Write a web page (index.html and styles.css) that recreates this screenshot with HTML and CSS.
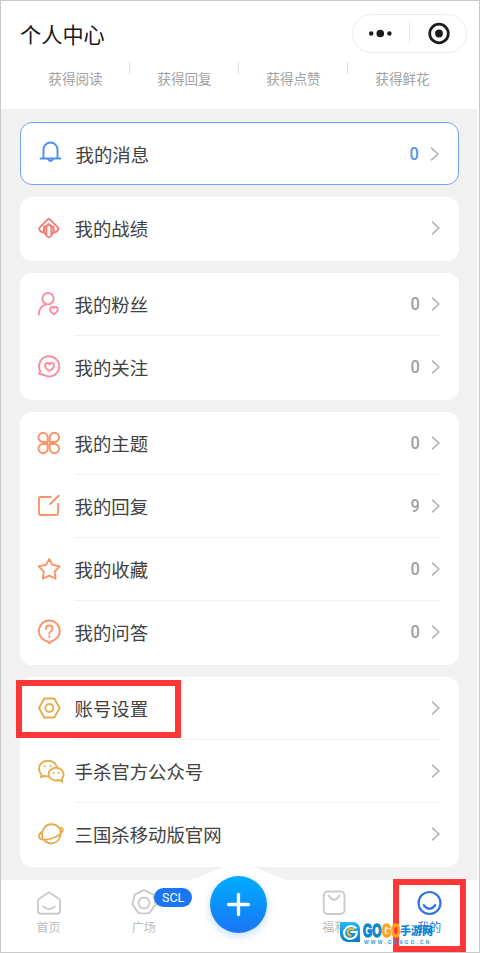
FILE: index.html
```html
<!DOCTYPE html>
<html lang="zh-CN">
<head>
<meta charset="utf-8">
<title>个人中心</title>
<link rel="stylesheet" href="styles.css">
</head>
<body>
<svg class="defs" width="0" height="0"><defs>
<symbol id="chev" viewBox="0 0 10 14"><path d="M1.5 1.2 8 7l-6.5 5.8"/></symbol>
</defs></svg>
<div class="screen">
  <header class="header">
    <div class="titlebar">
      <h1>个人中心</h1>
      <div class="capsule">
        <svg viewBox="0 0 114 40"><g fill="#1b1b1b"><circle cx="18.200" cy="19.500" r="2.200"/><circle cx="27.300" cy="19.500" r="3.800"/><circle cx="36.400" cy="19.500" r="2.200"/><circle cx="86" cy="19.500" r="3.900"/></g><path d="M56.500 8v22" stroke="#ededed"/><circle cx="86" cy="19.500" r="9.300" fill="none" stroke="#1b1b1b" stroke-width="2.700"/></svg>
      </div>
    </div>
    <div class="stats"><span>获得阅读</span><span>获得回复</span><span>获得点赞</span><span>获得鲜花</span></div>
  </header>

  <main class="list">
    <section class="card active">
      <div class="row blue"><svg class="icon" viewBox="0 0 28 28"><path d="M7.500 20V11.500a7 7 0 0 1 14 0V20M4.500 20.500h20M12.200 21.500q2.300 3 4.600 0"/></svg><div class="body"><span>我的消息</span><b>0</b><svg class="chev"><use href="#chev"/></svg></div></div>
    </section>
    <section class="card">
      <div class="row red"><svg class="icon" viewBox="0 0 28 28"><path d="M11.300 20.800 9 18.600Q5.500 18.500 4.300 15.500q-.5-1.200.5-2.200l7.700-7.700q1.300-1.200 2.600 0l7.700 7.700q1 1 .5 2.200-1.200 3-4.700 3.100l-2.300 2.200M11.300 13.500v8q2.500 3.500 5 0v-8M9 18.600v-6q3.200.2 4.800-2.600 1.600 2.800 4.800 2.600v6"/></svg><div class="body"><span>我的战绩</span><svg class="chev"><use href="#chev"/></svg></div></div>
    </section>
    <section class="card">
      <div class="row pink"><svg class="icon" viewBox="0 0 28 28"><circle cx="13" cy="8.700" r="5.700"/><path d="M3.800 24.500q.2-8.200 7.200-10.200M18.900 24.100c-5.500-3-4.200-7.100-1.800-7.100 1.100 0 1.800.8 1.800 1.200 0-.4.700-1.200 1.800-1.200 2.400 0 3.700 4.100-1.800 7.100Z"/></svg><div class="body"><span>我的粉丝</span><b>0</b><svg class="chev"><use href="#chev"/></svg></div></div>
      <div class="row pink"><svg class="icon" viewBox="0 0 28 28"><path d="M5.200 18A10.100 10.100 0 1 1 9 22L3.800 20.700q1.700-.6 1.400-2.700M14.500 18c-6.500-3.800-4.800-8-2.200-8 1.300 0 2.200 1 2.200 1.500 0-.5.900-1.500 2.200-1.500 2.600 0 4.300 4.200-2.200 8Z"/></svg><div class="body"><span>我的关注</span><b>0</b><svg class="chev"><use href="#chev"/></svg></div></div>
    </section>
    <section class="card">
      <div class="row orange"><svg class="icon" viewBox="0 0 28 28"><path d="M12.700 13H8.200a4.600 4.600 0 1 1 4.500-4.600ZM14.800 13h4.500a4.600 4.600 0 1 0-4.500-4.600ZM12.700 15H8.200a4.600 4.600 0 1 0 4.500 4.600ZM14.800 15h4.500a4.600 4.600 0 1 1-4.500 4.600Z"/></svg><div class="body"><span>我的主题</span><b>0</b><svg class="chev"><use href="#chev"/></svg></div></div>
      <div class="row orange"><svg class="icon" viewBox="0 0 28 28"><path d="M15.800 5H5.500Q4 5 4 6.500v15Q4 23 5.500 23h16q1.500 0 1.500-1.500V11.800M15.200 12l8.600-8.200"/></svg><div class="body"><span>我的回复</span><b>9</b><svg class="chev"><use href="#chev"/></svg></div></div>
      <div class="row orange"><svg class="icon" viewBox="0 0 28 28"><path d="m14.200 4 3.200 5.900 7.200 1.400-5 5.300 1 7-6.400-3-6.400 3 1-7-5-5.300L11 9.900Z"/></svg><div class="body"><span>我的收藏</span><b>0</b><svg class="chev"><use href="#chev"/></svg></div></div>
      <div class="row orange"><svg class="icon" viewBox="0 0 28 28"><path d="M14.300 25.300q-1-2.100-4.100-2.800a10.400 10.400 0 1 1 8.200 0q-3.100.7-4.100 2.800ZM10.900 10.800q0-3.300 3.400-3.300 3.300 0 3.300 3 0 1.500-1.800 2.700-1.500 1-1.500 2.500M14.300 17.900v1"/></svg><div class="body"><span>我的问答</span><b>0</b><svg class="chev"><use href="#chev"/></svg></div></div>
    </section>
    <section class="card">
      <div class="row gold"><svg class="icon" viewBox="0 0 28 28"><path d="M9.300 4.500h10L24.600 14l-5.300 9.500h-10L4 14Z"/><circle cx="14.300" cy="14" r="4"/></svg><div class="body"><span>账号设置</span><svg class="chev"><use href="#chev"/></svg></div></div>
      <div class="row gold"><svg class="icon" viewBox="0 0 28 28"><path d="M13.300 19.300q-2 .2-4-.5L6 20.300l.5-2.900A7.900 7.900 0 0 1 4 11.500C4 7 8 3.800 13 3.800c4.700 0 8 2.700 8.700 6.200M28.600 17.300c0-3.800-3.500-6.500-7.500-6.500s-7.500 2.700-7.500 6.200c0 3.700 3.500 6.500 7.500 6.500q1.500 0 3-.5l3.300 1.700-.5-2.800q1.700-1.700 1.700-4.600Z"/><path class="dots" d="M9.700 9.300v.1M15.300 9.300v.1M18.800 16v.1M23.500 16v.1"/></svg><div class="body"><span>手杀官方公众号</span><svg class="chev"><use href="#chev"/></svg></div></div>
      <div class="row gold"><svg class="icon" viewBox="0 0 28 28"><path d="M7.500 17.500C5.800 10.500 10 4.200 16.500 4.200c6.500 0 10.500 5.300 9 11.300-1.200 4.800-5 8-9.500 8q-4 0-6.500-2.800M7.300 11.500C3.800 14 3 16.800 4.600 18.300c2.600 2.400 11 1.700 17-1.800 6-3.400 8-7.300 4.600-8.500"/></svg><div class="body"><span>三国杀移动版官网</span><svg class="chev"><use href="#chev"/></svg></div></div>
    </section>
  </main>

  <nav class="tabs">
    <svg class="hump" viewBox="0 0 120 16"><path d="M0 16C24 16 36 0 60 0s36 16 60 16Z" fill="#fff"/></svg>
    <div class="tab"><svg viewBox="0 0 28 28"><path d="M14 3.200 4 9.800q-1 .7-1 2v10q0 3 3 3h16q3 0 3-3v-10q0-1.300-1-2ZM8.200 17.400q5.800 5.500 11.600 0"/></svg><span>首页</span></div>
    <div class="tab"><svg viewBox="0 0 28 28"><path d="m14 1.200 9.300 4.500 2.300 9.700-6.400 9H8.800l-6.400-9 2.300-9.700Z"/><circle cx="14" cy="14" r="5.500"/></svg><span>广场</span><i class="badge">SCL</i></div>
    <div class="tab"><div class="add"><svg viewBox="0 0 57 57"><path d="M28.500 18.500v20M18.500 28.500h20"/></svg></div></div>
    <div class="tab"><svg viewBox="0 0 28 28"><rect x="3.700" y="2.500" width="20.800" height="22.500" rx="4"/><path d="M8.800 6.500q5.300 8.500 10.600 0"/></svg><span>福利</span></div>
    <div class="tab on"><svg viewBox="0 0 28 28"><circle cx="14.500" cy="14" r="11"/><path d="M8.800 16.200q5.700 7 11.400 0"/></svg><span>我的</span></div>
  </nav>

  <div class="mark mark-setting"></div>
  <div class="mark mark-mine"></div>
  <div class="watermark">
    <svg viewBox="0 0 22 22"><defs><linearGradient id="wg" x2="0" y2="1"><stop stop-color="#29b8f5"/><stop offset="1" stop-color="#087cc5"/></linearGradient></defs><path d="M0 0h14q7 1 7 8v13H8Q1 20 0 13Z" fill="url(#wg)"/><path d="M17 6.500Q13 2.500 8 5.300 2.500 9 5 14.500q3 4.500 8.500 2.500 4-1.500 4-6.500h-6.500" fill="none" stroke="#fff" stroke-width="2.200"/><path d="M15 8Q10 5.500 8 10q0 4 4 4.500" fill="none" stroke="#ffb52b" stroke-width="2"/></svg>
    <div class="wm-text"><div class="wm-name"><em>GO</em><em class="gold-go">GO</em><strong>手游网</strong></div><small>WWW.GO9GO.CN</small></div>
  </div>
</div>
</body>
</html>
```
FILE: styles.css
```css
* { box-sizing: border-box; }
body {
  margin: 0;
  background: #fff;
  font-family: "Noto Sans CJK SC", "Noto Sans", sans-serif;
}
.defs { position: absolute; }
.screen {
  position: relative;
  width: 480px;
  height: 953px;
  border: 1px solid #c9c9c9;
  padding-right: 2px;
  display: flex;
  flex-direction: column;
  overflow: hidden;
}
.header { height: 108px; flex: none; background: #fff; }
.titlebar {
  display: flex;
  justify-content: space-between;
  padding: 13px 10px 0 19px;
  height: 60px;
}
h1 {
  margin: 5px 0 0;
  font-size: 21.2px;
  line-height: 30px;
  font-weight: 400;
  color: #161616;
}
.capsule {
  width: 115px;
  height: 39px;
  border: 1px solid #eee;
  border-radius: 20px;
}
.capsule svg { display: block; width: 114px; height: 40px; margin-top: -1px; }
.stats { display: flex; padding-left: 20px; }
.stats span {
  width: 109px;
  height: 34px;
  padding-top: 7px;
  text-align: center;
  font-size: 13.6px;
  line-height: 20px;
  color: #a2a2a2;
  background: linear-gradient(#ddd, #ddd) right 1px / 1px 12px no-repeat;
}
.stats span:last-child { background: none; }
.list {
  flex: 1;
  min-height: 0;
  background: #f1f1f1;
  padding: 13px 18px 0 19px;
  display: flex;
  flex-direction: column;
  gap: 12.2px;
}
.card { flex: none; background: #fff; border-radius: 12px; overflow: hidden; padding-bottom: .5px; }
.card.active { border: 1.5px solid #6fa4f2; height: 63px; padding: 0; }
.row {
  display: flex;
  align-items: stretch;
  height: 63.1px;
  padding: 0 19px 0 14.5px;
}
.active .row { height: 62px; }
.icon {
  width: 28px;
  height: 28px;
  margin: 17px 12px 0 0;
  flex: none;
  fill: none;
  stroke: currentColor;
  stroke-width: 1.9;
  stroke-linecap: round;
  stroke-linejoin: round;
  overflow: visible;
}
.active .icon { margin-top: 15px; }
.body {
  flex: 1;
  display: flex;
  align-items: center;
  border-bottom: 1px solid #f2f2f2;
}
.row:last-child .body { border-bottom-color: transparent; }
.body span { flex: 1; font-size: 18.4px; line-height: 28px; color: #414141; }
.body b {
  font: 500 19px/28px Roboto, sans-serif;
  color: #a0a0a0;
  margin-right: 11px;
  transform: scaleX(.86);
  transform-origin: right;
}
.chev {
  width: 10px;
  height: 14px;
  fill: none;
  stroke: #b2b2b2;
  stroke-width: 1.6;
  stroke-linecap: round;
  stroke-linejoin: round;
  margin-right: -1px;
}
.blue { color: #4d8ff5; }
.blue .body b { color: #5594f3; }
.red { color: #f87972; }
.pink { color: #fb8ba0; }
.orange { color: #fa9468; }
.gold { color: #e6ad50; }
.tabs {
  position: relative;
  flex: none;
  height: 72px;
  background: #fff;
  display: flex;
}
.hump { position: absolute; left: 178px; top: -15px; width: 120px; height: 16px; }
.tab {
  position: relative;
  width: 95.2px;
  display: flex;
  flex-direction: column;
  align-items: center;
  padding-top: 9px;
  color: #cbcbcb;
}
.tab > svg { width: 28px; height: 28px; fill: none; stroke: currentColor; stroke-width: 1.9; stroke-linejoin: round; stroke-linecap: round; }
.tab span { font-size: 12px; line-height: 18px; color: #bcbcbc; margin-top: 1px; }
.tab.on { color: #2f74e4; }
.tab.on > svg { stroke-width: 2.2; }
.tab.on span { color: #2f74e4; }
.badge {
  position: absolute;
  left: 58px;
  top: 8px;
  width: 38px;
  height: 19px;
  border-radius: 10px;
  background: #1b76f5;
  color: #fff;
  font: 12.5px/20px Roboto, sans-serif;
  text-align: center;
}
.add {
  width: 57px;
  height: 57px;
  flex: none;
  margin-top: -13.5px;
  border-radius: 50%;
  background: linear-gradient(#00adff, #1a75f5);
  box-shadow: 0 3px 8px #1a75f540;
}
.add svg { display: block; fill: none; stroke: #fff; stroke-width: 3.3; stroke-linecap: round; }
.mark { position: absolute; border: 6px solid #fc3737; }
.mark-setting { left: 15px; top: 679px; width: 165px; height: 58px; }
.mark-mine { left: 392px; top: 878px; width: 73px; height: 73px; }
.watermark { position: absolute; left: 339px; top: 921px; display: flex; }
.watermark > svg { width: 21px; height: 21px; }
.wm-text { margin-left: 2px; }
.wm-name { display: flex; align-items: center; height: 17px; line-height: 17px; color: #0b86d0; }
.wm-name em { font: 700 19px/17px "Liberation Sans", sans-serif; width: 18.5px; white-space: nowrap; transform: scaleX(.62); transform-origin: left; -webkit-text-stroke: 1.5px currentColor; }
.wm-name .gold-go { color: #ffa51e; }
.wm-name strong { font-size: 11px; font-weight: 900; }
.watermark small { display: block; font: 700 5px/6px "Liberation Sans", sans-serif; letter-spacing: 2.1px; color: #249bdb; margin-left: 1px; white-space: nowrap; }
```
